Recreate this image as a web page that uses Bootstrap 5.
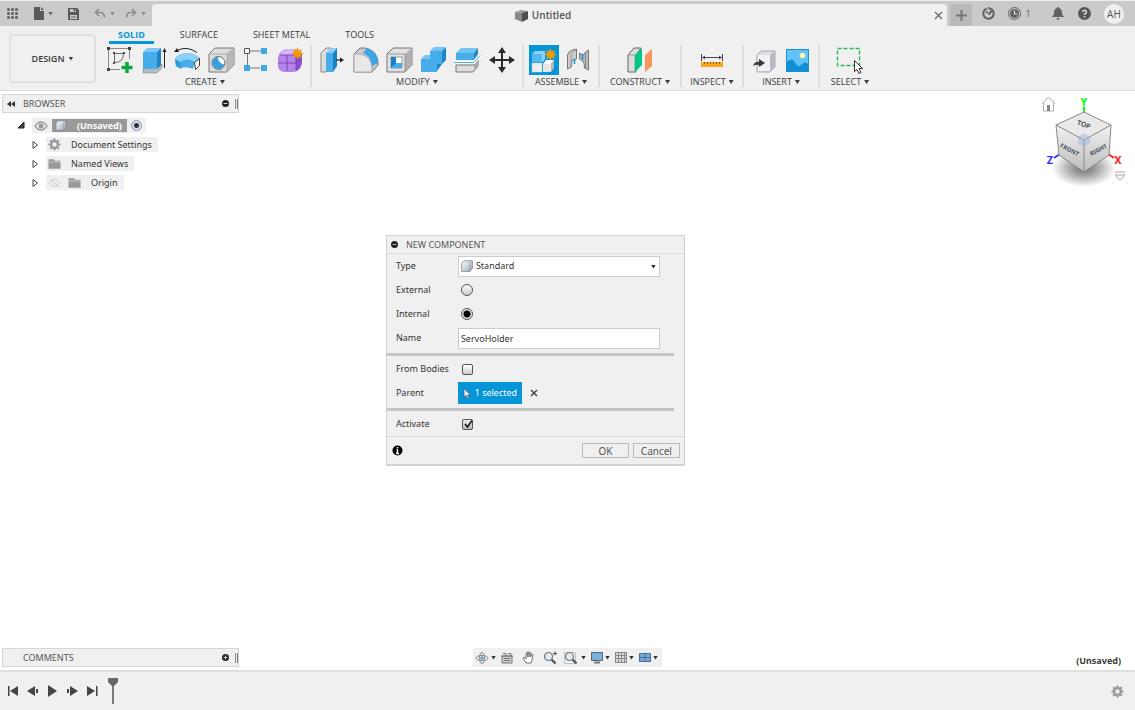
<!DOCTYPE html>
<html lang="en">
<head>
<meta charset="utf-8">
<meta name="viewport" content="width=device-width, initial-scale=1">
<title>Untitled</title>
<link href="https://cdn.jsdelivr.net/npm/bootstrap@5.3.0/dist/css/bootstrap.min.css" rel="stylesheet">
<style>
  :root { --ink:#3c3c3c; --panel:#f0f0f0; --blue:#0696d7; --rule:#d9d9d9; }
  body { font-family:"Open Sans","Noto Sans",sans-serif; font-size:9px; line-height:12px; color:var(--ink); background:#fff; }
  button { font:inherit; color:inherit; background:none; border:0; padding:0; }
  svg { display:block; flex:none; }
  .lucida { font-family:"Noto Sans","Open Sans",sans-serif; }
  .tri { display:inline-block; width:5px; height:4px; background:currentColor; clip-path:polygon(0 0,100% 0,50% 100%); flex:none; }
  .icon-btn { display:flex; align-items:center; justify-content:center; flex:none; }

  .titlebar { height:26px; background:#cacaca; border-top:1px solid #eee; color:#666; }
  .file-tools { width:152px; height:25px; padding-left:6px; gap:15px; }
  .file-tools .icon-btn { gap:4px; }
  .faded { color:#8c8c8c; }
  .history { gap:10px; }
  .doc-tab { background:var(--panel); border-radius:4px 4px 0 0; margin-top:3px; height:22px; color:#555; font-size:10px; }
  .add-tab { width:22px; height:22px; margin:3px 0 0 3px; background:#bababa; border-radius:3px 3px 0 0; }
  .session { width:163px; height:25px; color:#606060; padding:0 11px 0 10px; }
  .avatar { width:20px; height:20px; border-radius:50%; background:#f0f0f0; color:#555; font-size:10px; }

  .ribbon { background:var(--panel); height:65px; border-bottom:1px solid #dcdcdc; }
  .workspace { width:87px; height:49px; margin:8px 7px 0 9px; border:2px solid #e0e0e0; border-radius:4px; font-weight:600; }
  .mode-tabs { height:18px; gap:17px; padding-left:6px; }
  .mode-tabs .nav-link { padding:3px 9px 0; color:var(--ink); border-bottom:3px solid transparent; border-radius:0; line-height:12px; height:18px; font-weight:500; }
  .mode-tabs .nav-link.active { color:var(--blue); border-color:var(--blue); font-weight:700; }
  .tool-group { border-right:2px solid #dedede; height:42px; padding:0 3px; margin-top:1px; }
  .tool-group:last-child { border:0; }
  .tool-btn { width:34px; height:30px; }
  .tool-btn.on { width:30px; margin:0 2px; background:var(--blue); }
  .group-name { height:12px; gap:3px; margin-top:1px; font-weight:500; white-space:nowrap; }
  .w-construct { width:82px; } .w-inspect { width:62px; } .w-insert { width:76px; } .w-select { width:60px; }

  .browser { padding-top:3px; }
  .panel-bar { width:237px; height:19px; margin-left:2px; padding:0 0 0 4px; background:var(--panel); border:1px solid #d6d6d6; color:#555; }
  .grip { width:3px; height:10px; margin-left:6px; border-left:1px solid #888; border-right:1px solid #777; }
  .tree-list { padding-top:3px; }
  .tree-row { height:19px; padding-left:28px; }
  .tree-row.root { padding-left:14px; }
  .tree-chip { background:var(--panel); height:15px; color:#333; padding:0 6px 0 2px; gap:10px; margin-left:4px; }
  .tree-chip.tight { gap:4px; padding-right:4px; }
  .tree-icons { gap:7px; }
  .picked { background:#999; color:#fff; height:13px; font-weight:700; gap:10px; padding:0 5px 0 3px; }
  .twist { width:14px; padding-left:4px; }

  .dialog-box { position:absolute; left:34%; top:144px; width:299px; background:var(--panel); border:1px solid #d2d2d2; border-bottom-width:2px; color:#333; }
  .dialog-head { height:18px; border-bottom:1px solid #ddd; color:#555; padding-left:4px; }
  .field { height:24px; padding-left:9px; }
  .field > label, .field > .lbl { width:62px; flex:none; }
  .field .form-select, .field .form-control { width:202px; height:21px; font-size:9px; line-height:12px; border:1px solid #ccc; border-radius:0; color:#333; background-color:#fff; padding:2px; }
  .field .form-select { padding-left:17px; background-image:none; }
  .pick-icon { position:absolute; left:3px; top:4px; pointer-events:none; }
  .pick-tri { position:absolute; right:4px; top:9px; pointer-events:none; color:#222; }
  .tick { appearance:none; width:11px; height:11px; margin:0 0 0 4px; border:1px solid #555; border-radius:2px; background:linear-gradient(#fff,#ccc); }
  .tick.form-round { width:12px; height:12px; margin-left:3px; border-radius:50%; }
  .tick.form-round:checked { background:radial-gradient(circle,#000 0 3px,#ddd 4px); }
  .tree-chip .tick.form-round { width:11px; height:11px; margin:0; border-color:#89a; }
  .tree-chip .tick.form-round:checked { background:radial-gradient(circle,#333 0 2px,#d4deea 3px); }
  .tick[type=checkbox]:checked { background:linear-gradient(#eee,#bbb) ; }
  .tick-mark { position:absolute; left:4px; top:-1px; pointer-events:none; }
  .rule { height:3px; margin:3px 10px 1px 0; background:#c4c4c4; }
  .selected-btn { height:22px; width:64px; background:var(--blue); color:#fff; }
  .dialog-foot { height:28px; border-top:1px solid #ddd; padding:0 4px 0 5px; }
  .flat-btn { width:47px; height:15px; border:1px solid #bbb; color:#555; font-size:10px; line-height:12px; }

  .bottom-strip { padding-bottom:3px; }
  .nav-strip { background:var(--panel); height:19px; color:#333; }
  .doc-state { padding-right:14px; }
  .cube-area text { font-family:"Noto Sans",sans-serif; font-weight:700; }
  .timeline { background:var(--panel); height:40px; border-top:2px solid #dfdfdf; color:#444; padding:0 7px; }
</style>
</head>
<body>
<svg width="0" height="0" class="position-absolute" aria-hidden="true">
  <defs>
    <linearGradient id="silver" x2="1" y2="1"><stop stop-color="#fff"/><stop offset="1" stop-color="#9aa6b4"/></linearGradient>
    <linearGradient id="faceL" x2="0" y2="1"><stop stop-color="#f2f2f2"/><stop offset="1" stop-color="#bcbcbc"/></linearGradient>
    <radialGradient id="shade"><stop stop-color="#000" stop-opacity=".6"/><stop offset=".5" stop-color="#000" stop-opacity=".3"/><stop offset="1" stop-color="#000" stop-opacity="0"/></radialGradient>
    <symbol id="gear" viewBox="0 0 14 14"><circle cx="7" cy="7" r="3.6" fill="none" stroke="#999" stroke-width="2.4"/><path d="M7 .5v2.5M7 11v2.5M.5 7H3M11 7h2.5M2.4 2.4l1.8 1.8M9.8 9.8l1.8 1.8M2.4 11.6l1.8-1.8M9.8 4.2l1.8-1.8" stroke="#999" stroke-width="2.4"/></symbol>
    <symbol id="part" viewBox="0 0 12 12"><path d="M.6 3.500 3 .8h8.400v7.700L9 11.400H.6z" fill="url(#silver)" stroke="#778" stroke-width=".7"/><path d="M8.900 3.500v7.600M8.900 3.500l2.300-2.400" stroke="#8d99a8" stroke-width=".7"/></symbol>
    <symbol id="folder" viewBox="0 0 14 12"><path d="M.5 1h6l1 1.500h6v1H.500zM.500 4.200h13v7H.500z" fill="#999"/></symbol>
    <symbol id="spark" viewBox="0 0 12 12"><path d="m6 0 1.100 3.200L10.200 1.800 8.800 4.900 12 6 8.800 7.100l1.400 3.100-3.100-1.400L6 12 4.900 8.800l-3.100 1.400 1.400-3.100L0 6l3.200-1.100L1.800 1.800l3.100 1.400z" fill="#f79a00"/></symbol>
    <symbol id="zoomer" viewBox="0 0 14 14"><path d="m8.500 8.500 4 4" stroke="#555" stroke-width="2.400"/><circle cx="5.500" cy="5.500" r="4" fill="#dbeaf5" stroke="#777" stroke-width="1.200"/></symbol>
  </defs>
</svg>

<div class="d-flex flex-column min-vh-100">
  <header>
    <div class="titlebar d-flex">
      <div class="file-tools d-flex align-items-center">
        <button class="icon-btn" aria-label="Data panel"><svg width="13" height="13" fill="#555"><path d="M1 1h3v3H1zM5 1h3v3H5zM9 1h3v3H9zM1 5h3v3H1zM5 5h3v3H5zM9 5h3v3H9zM1 9h3v3H1zM5 9h3v3H5zM9 9h3v3H9z" stroke="#cacaca" stroke-width=".5"/></svg></button>
        <button class="icon-btn" aria-label="File"><svg width="10" height="13"><path d="M0 0h6v4h4v9H0zM7 0l3 3H7z" fill="#5a5a5a"/></svg><span class="tri"></span></button>
        <button class="icon-btn" aria-label="Save"><svg width="11" height="12"><path d="M0 0h9l2 2v10H0z" fill="#5a5a5a"/><path d="M2 1h6v3H2zM2 7h7v4H2z" fill="#cacaca"/><path d="M6 1h1v2H6zM3 9h5" stroke="#5a5a5a" fill="#5a5a5a"/></svg></button>
        <div class="history faded d-flex">
          <button class="icon-btn" aria-label="Undo"><svg width="12" height="11"><path d="M5 1 1.500 4.500 5 8M2 4.500h5q3 0 3.500 5" fill="none" stroke="#8c8c8c" stroke-width="1.700"/></svg><span class="tri"></span></button>
          <button class="icon-btn" aria-label="Redo"><svg width="12" height="11"><path d="m7 1 3.500 3.500L7 8M10 4.500H5Q2 4.500 1.500 9.500" fill="none" stroke="#8c8c8c" stroke-width="1.700"/></svg><span class="tri"></span></button>
        </div>
      </div>
      <div class="doc-tab d-flex align-items-center flex-grow-1">
        <div class="d-flex flex-grow-1 justify-content-center align-items-center gap-1"><svg width="13" height="13"><path d="M0 3 6 1l7 1-6 2z" fill="#999"/><path d="m0 3 7 1v9l-7-3z" fill="#888"/><path d="m7 4 6-2v8l-6 3z" fill="#4d4d4d"/></svg><span class="fw-semibold">Untitled</span></div>
        <button class="icon-btn me-1" aria-label="Close tab"><svg width="9" height="9"><path d="m1 1 7 7M8 1 1 8" stroke="#666" stroke-width="1.200"/></svg></button>
      </div>
      <button class="add-tab icon-btn" aria-label="New tab"><svg width="11" height="11"><path d="M5.500 0v11M0 5.500h11" stroke="#777" stroke-width="2"/></svg></button>
      <div class="session d-flex align-items-center justify-content-between">
        <button class="icon-btn" aria-label="Extensions"><svg width="13" height="13"><circle cx="6.500" cy="6.500" r="5.200" fill="none" stroke="#606060" stroke-width="2"/><path d="M6.500 7.500 9.500 4M4 4.500l1.500 1.200" fill="none" stroke="#606060" stroke-width="2"/><path d="m4 0 2 2" stroke="#cacaca" stroke-width="1.500"/></svg></button>
        <button class="icon-btn gap-1" aria-label="Job status"><svg width="13" height="13"><circle cx="6.500" cy="6.500" r="6" fill="none" stroke="#606060"/><circle cx="6.500" cy="6.500" r="4.500" fill="#606060"/><path d="M6.500 3.500v3.500h3" fill="none" stroke="#ddd" stroke-width="1.200"/></svg>1</button>
        <button class="icon-btn ms-2" aria-label="Notifications"><svg width="12" height="13"><path d="M6 0a1 1 0 0 1 1 1q3 1 3 5 0 2.500 2 4H0q2-1.500 2-4 0-4 3-5a1 1 0 0 1 1-1zM4.500 11h3Q7 13 6 13t-1.500-2z" fill="#606060"/></svg></button>
        <button class="icon-btn" aria-label="Help"><svg width="13" height="13"><circle cx="6.500" cy="6.500" r="6.500" fill="#555"/><path d="M4.500 5.200Q4.700 3.300 6.500 3.300T8.500 5Q8.500 6 7.300 6.500 6.500 7 6.500 8M6.500 9v1.600" fill="none" stroke="#ddd" stroke-width="1.500"/></svg></button>
        <button class="icon-btn avatar" aria-label="Account">AH</button>
      </div>
    </div>

    <div class="ribbon d-flex">
      <button class="workspace icon-btn gap-1">DESIGN <span class="tri"></span></button>
      <div class="flex-grow-1">
        <nav class="mode-tabs nav">
          <a class="nav-link active" href="#">SOLID</a><a class="nav-link" href="#">SURFACE</a><a class="nav-link" href="#">SHEET METAL</a><a class="nav-link" href="#">TOOLS</a>
        </nav>
        <div class="d-flex">
          <div class="tool-group ps-0">
            <div class="d-flex">
              <button class="tool-btn icon-btn" aria-label="Create sketch"><svg width="28" height="28"><path d="M4 2.500h19M2.500 4v18M4 23.500h10M23.500 4v9" stroke="#888" fill="none"/><path d="M1 1h3v3H1zM22 1h3v3h-3zM1 22h3v3H1zM7 6h2v2H7zM17 6h2v2h-2zM7 16h2v2H7z" fill="#444"/><path d="M8.500 7.500h9q0 9-9 9z" fill="none" stroke="#666"/><path d="M21 16v11M15.500 21.500h11" stroke="#0aa83c" stroke-width="3.500"/></svg></button>
              <button class="tool-btn icon-btn" aria-label="Extrude"><svg width="28" height="28"><path d="M3 22h15l4-4v4l-5 5H3z" fill="#bbb" stroke="#888" stroke-width=".6"/><path d="M3 6h14v17H3z" fill="#47adea"/><path d="m3 6 4-4h14l-4 4z" fill="#7cc9f5"/><path d="m17 6 4-4v17l-4 4z" fill="#1c86c7"/><path d="M24.500 22V5" stroke="#222"/><path d="m24.500 2 2 4h-4z" fill="#222"/></svg></button>
              <button class="tool-btn icon-btn" aria-label="Revolve"><svg width="28" height="28"><path d="M1 13Q3 8 13 7q7 0 13 5l-6 5q0 3-1 6-6-3-12-1l-5-2z" fill="#47adea"/><path d="M1 13Q3 8 13 7q7 0 13 5l-5 4Q13 11 6 16z" fill="#8bd0f7"/><path d="m1 13 1 7 5 3-1-7z" fill="#2f9ad9"/><path d="m20.500 16.500 5-4v7l-4 4z" fill="#fff" stroke="#333"/><path d="M3 4.500q10-5 20 2" fill="none" stroke="#222"/><path d="m0 6 3-4 2 4z" fill="#222"/></svg></button>
              <button class="tool-btn icon-btn" aria-label="Hole"><svg width="28" height="28"><path d="m1 8 6-6h19v17l-7 7H1z" fill="#ddd" stroke="#777"/><path d="m19 8 7-6v17l-7 7z" fill="#b8b8b8"/><path d="M1 8h18v18M19 8l7-6" fill="none" stroke="#aaa"/><circle cx="10.500" cy="17" r="6.500" fill="#fff" stroke="#666"/><path d="M10 10.500q0 7 6.500 8a6.200 6.200 0 1 1-6.500-8z" fill="#379ee0"/></svg></button>
              <button class="tool-btn icon-btn" aria-label="Pattern"><svg width="28" height="28"><path d="M8 5h11M5.500 8v11M8 22h10" stroke="#777"/><path d="M2.500 2.500h5v5h-5z" fill="#fff" stroke="#555"/><path d="M19 2h6v6h-6zM2 19h6v6H2zM19 19h6v6h-6z" fill="#3fa9e8"/></svg></button>
              <button class="tool-btn icon-btn" aria-label="Create form"><svg width="28" height="28"><path d="M2 12q1-7 8-9h8q8 1 8 7v6q-1 7-5 9-2 1-5 1H8q-6-1-6-6z" fill="#b583ea"/><path d="M4 9q2-5 7-6h7q4 1 5 4-2 2-5 2z" fill="#d6b4f7"/><path d="M20 10q3-2 6-3v9q-1 7-6 9z" fill="#8c50cc"/><path d="M2 17h18l5-4M11 9v16M4 9h13q3 0 3 3v13" fill="none" stroke="#7038b0" stroke-width=".8"/><use href="#spark" x="15" y="1" width="13" height="13"/></svg></button>
            </div>
            <button class="group-name icon-btn w-100">CREATE <span class="tri"></span></button>
          </div>
          <div class="tool-group">
            <div class="d-flex">
              <button class="tool-btn icon-btn" aria-label="Press pull"><svg width="28" height="28"><path d="m3 7 5-5h5v18l-5 6H3z" fill="#ddd" stroke="#888"/><path d="M8 7h7v19H8z" fill="#47adea"/><path d="m8 7 5-5h6l-4 5z" fill="#8bd0f7"/><path d="m15 7 4-5v18l-4 6z" fill="#1683c5"/><path d="M18 14h6" stroke="#222" stroke-width="1.200"/><path d="m22 11.500 4 2.500-4 2.500z" fill="#222"/></svg></button>
              <button class="tool-btn icon-btn" aria-label="Fillet"><svg width="28" height="28"><path d="m2 8 6-6h5q12 2 13 14v3l-6 7H2z" fill="#c8c8c8" stroke="#777"/><path d="M2 8h6q11 2 12 13v5H2z" fill="#e8e8e8" stroke="#aaa"/><path d="m11 7 4-5q10 3 11 15l-6 3Q19 10 11 7z" fill="#3ca5e5"/></svg></button>
              <button class="tool-btn icon-btn" aria-label="Shell"><svg width="28" height="28"><path d="m1 8 6-6h19v17l-7 7H1z" fill="#e2e2e2" stroke="#777"/><path d="m19 8 7-6v17l-7 7z" fill="#b0b0b0"/><path d="M1 8h18v18" fill="none" stroke="#999"/><path d="M5 11h11v11H5z" fill="#fff" stroke="#999"/><path d="M5 11h5v6h6v5H5z" fill="#47adea"/><path d="M5 11v11l5-5v-6z" fill="#1683c5"/></svg></button>
              <button class="tool-btn icon-btn" aria-label="Combine"><svg width="28" height="28"><path d="M1 13h9V5h12v13h-5v8H1z" fill="#47adea"/><path d="m1 13 4-4h5V5l4-4h12l-4 4H10v8z" fill="#75c5f3"/><path d="m22 5 4-4v13l-4 4zM17 18h5l-5 7z" fill="#1c86c7"/></svg></button>
              <button class="tool-btn icon-btn" aria-label="Split body"><svg width="28" height="28"><path d="M2 7h18v7H2z" fill="#47adea"/><path d="m2 7 5-5h17l-4 5z" fill="#75c5f3"/><path d="m20 7 4-5v6l-4 6z" fill="#1c86c7"/><path d="M2 19h18l4-5v6l-5 6H2z" fill="#ddd" stroke="#777"/><path d="m20 19 4-5v6l-4 5z" fill="#aaa"/><path d="M0 16.500h20l6-7" fill="none" stroke="#fff" stroke-width="3"/><path d="M0 16.500h20l6-7" fill="none" stroke="#47adea"/></svg></button>
              <button class="tool-btn icon-btn" aria-label="Move"><svg width="28" height="28"><path d="M14 5v18M5 14h18" stroke="#2b2b2b" stroke-width="2"/><path d="m14 1 4 6h-8zM14 27l4-6h-8zM1 14l6-4v8zM27 14l-6-4v8z" fill="#2b2b2b"/></svg></button>
            </div>
            <button class="group-name icon-btn w-100">MODIFY <span class="tri"></span></button>
          </div>
          <div class="tool-group">
            <div class="d-flex">
              <button class="tool-btn icon-btn on" aria-label="New component"><svg width="28" height="28"><path d="m2 8 3-3h10v8l-2 3H2z" fill="#8bd0f7"/><path d="M2 8h10v8H2z" fill="#57b9f3"/><path d="M2 17h10v9H2z" fill="#eee" stroke="#ccc" stroke-width=".5"/><path d="m13 18 3-4h8l-3 4z" fill="#fff"/><path d="M13 18h8v8h-8z" fill="#e6e6e6"/><path d="m21 18 3-4v8l-3 4z" fill="#b6b6b6"/><use href="#spark" x="14" y="2" width="13" height="13"/></svg></button>
              <button class="tool-btn icon-btn" aria-label="Joint"><svg width="28" height="28"><path d="M3.500 23V9q1-4 5-5l4-1v10l-4 1q-1 1-1 7z" fill="#ccc" stroke="#777"/><path d="M7 21V9q0-3 5-5" stroke="#999" fill="none"/><path d="m15.500 7 3 2q2 0 3-3l3-2v20l-4-2q0-6-2-7l-3-2z" fill="#bbb" stroke="#777"/><path d="M21.500 6v16" stroke="#888"/><path d="M10.500 18v-5M18.500 14V8" stroke="#0696d7" stroke-width="1.500"/></svg></button>
            </div>
            <button class="group-name icon-btn w-100">ASSEMBLE <span class="tri"></span></button>
          </div>
          <div class="tool-group w-construct">
            <div class="d-flex justify-content-center">
              <button class="tool-btn icon-btn" aria-label="Offset plane"><svg width="28" height="28"><path d="m2 9 6-7h7l-5 7v17H2z" fill="#ddd" stroke="#666"/><path d="M2 9h7v17" fill="none" stroke="#999"/><path d="m9 9 7-7v17l-7 7z" fill="#00c985"/><path d="m19 9 7-6v17l-7 6z" fill="#f7965a"/></svg></button>
            </div>
            <button class="group-name icon-btn w-100">CONSTRUCT <span class="tri"></span></button>
          </div>
          <div class="tool-group w-inspect">
            <div class="d-flex justify-content-center">
              <button class="tool-btn icon-btn" aria-label="Measure"><svg width="28" height="28"><path d="M3.500 8v7M24.500 8v7M5 11.500h18" stroke="#444"/><path d="m4 11.500 3-2v4zM24 11.500l-3-2v4z" fill="#444"/><path d="M3 16h22v5H3z" fill="#f9a61a"/><path d="M6.500 16v2M9.500 16v2M12.500 16v2M15.500 16v2M18.500 16v2M21.500 16v2" stroke="#8a5500"/></svg></button>
            </div>
            <button class="group-name icon-btn w-100">INSPECT <span class="tri"></span></button>
          </div>
          <div class="tool-group w-insert">
            <div class="d-flex justify-content-center">
              <button class="tool-btn icon-btn" aria-label="Insert derive"><svg width="28" height="28"><path d="m7 9 4-4h14v16l-5 5H7z" fill="#dcdce4" stroke="#aaa"/><path d="M8 9h12v16H8z" fill="#f2f2f6"/><path d="m20 9 5-4v16l-5 5z" fill="#b9b9c6"/><path d="M3 20q2-5 6-4v-3l6 4-6 4v-2q-3-1-6 1z" fill="#3a3a3a"/></svg></button>
              <button class="tool-btn icon-btn" aria-label="Insert image"><svg width="28" height="28"><path d="M2 3h23v23H2z" fill="#62c2f5"/><circle cx="18.500" cy="9.500" r="2.700" fill="#fff3b0"/><path d="M2 17q6-7 10 1 2 4 5 1 4-5 8 0v7H2z" fill="#0f8fd4"/><path d="M2.500 3.500h22v22h-22z" fill="none" stroke="#1b91d0"/></svg></button>
            </div>
            <button class="group-name icon-btn w-100">INSERT <span class="tri"></span></button>
          </div>
          <div class="tool-group w-select">
            <div class="d-flex justify-content-center">
              <button class="tool-btn icon-btn" aria-label="Select"><svg width="28" height="28"><path d="M1.500 2.500h22v17h-22z" fill="none" stroke="#2cb55c" stroke-width="1.400" stroke-dasharray="4 2"/><path d="M18.500 14.500v11l2.500-2 2 4 2-1-2-4h3.500z" fill="#fff" stroke="#333"/></svg></button>
            </div>
            <button class="group-name icon-btn w-100">SELECT <span class="tri"></span></button>
          </div>
        </div>
      </div>
    </div>
  </header>

  <main class="position-relative flex-grow-1 d-flex flex-column justify-content-between lucida">
    <div class="d-flex justify-content-between align-items-start">
      <aside class="browser">
        <div class="panel-bar d-flex align-items-center">
          <button class="icon-btn" aria-label="Collapse"><svg width="8" height="6"><path d="M4 0v6L0 3zM8 0v6L4 3z" fill="#333"/></svg></button>
          <span class="ms-2 flex-grow-1">BROWSER</span>
          <svg width="7" height="7"><circle cx="3.500" cy="3.500" r="3.500" fill="#222"/><path d="M1.500 3.500h4" stroke="#ccc"/></svg><span class="grip"></span>
        </div>
        <div class="tree-list">
          <div class="tree-row root d-flex align-items-center"><span class="twist"><svg width="7" height="7"><path d="M6 0v6H0z" fill="#444" stroke="#222"/></svg></span>
            <div class="tree-chip tight d-flex align-items-center"><svg width="14" height="10"><path d="M1 5q6-8 12 0-6 8-12 0z" fill="none" stroke="#999" stroke-width="1.300"/><circle cx="7" cy="5" r="2.500" fill="#999"/></svg>
              <span class="picked d-flex align-items-center"><svg width="12" height="11"><use href="#part"/></svg>(Unsaved)</span>
              <input type="radio" class="tick form-round" checked aria-label="Activate (Unsaved)"></div></div>
          <div class="tree-row d-flex align-items-center"><span class="twist"><svg width="7" height="8"><path d="M1 .500 5.500 4 1 7.500z" fill="#fff" stroke="#444"/></svg></span>
            <div class="tree-chip d-flex align-items-center"><svg width="13" height="13"><use href="#gear"/></svg>Document Settings</div></div>
          <div class="tree-row d-flex align-items-center"><span class="twist"><svg width="7" height="8"><path d="M1 .500 5.500 4 1 7.500z" fill="#fff" stroke="#444"/></svg></span>
            <div class="tree-chip d-flex align-items-center"><svg width="13" height="12"><use href="#folder"/></svg>Named Views</div></div>
          <div class="tree-row d-flex align-items-center"><span class="twist"><svg width="7" height="8"><path d="M1 .500 5.500 4 1 7.500z" fill="#fff" stroke="#444"/></svg></span>
            <div class="tree-chip d-flex align-items-center"><span class="tree-icons d-flex align-items-center"><svg width="13" height="10"><path d="M1 5q5-7 11 0-5 7-11 0zM2 1l9 8" fill="none" stroke="#ccc"/></svg><svg width="13" height="12"><use href="#folder"/></svg></span>Origin</div></div>
        </div>
      </aside>
      <div class="cube-area mt-1">
        <svg width="96" height="94" viewBox="0 0 96 94">
          <ellipse cx="45" cy="73" rx="32" ry="19" fill="url(#shade)"/>
          <path d="M3 8.500 9.500 2l6.500 6.500M4.500 7.500V16h10V7.500" fill="#fff" stroke="#aaa"/><path d="M8 10h3v6H8z" fill="#888"/>
          <path d="M45 12v8" stroke="#0f0" stroke-width="2"/><path d="m21 59-6 4" stroke="#33f" stroke-width="2"/><path d="m69 59 6 4" stroke="#f22" stroke-width="2"/>
          <path d="m17 30 28-13 27 13-27 15z" fill="#e9e9e9"/><path d="m17 30 28 15v32L20 60z" fill="url(#faceL)"/><path d="M72 30 45 45v32l25-17z" fill="url(#faceL)"/>
          <path d="m17 30 28-13 27 13-27 15zM17 30l3 30 25 17 25-17 2-30M45 45v32" fill="none" stroke="#888"/>
          <path d="m39 42 6-4 6 4v6l-6 4-6-4z" fill="#9db5d8" opacity=".5"/>
          <text x="45" y="32" font-size="7" text-anchor="middle" fill="#4b5560" transform="rotate(20 45 29)">TOP</text>
          <text x="31" y="57" font-size="6" text-anchor="middle" fill="#4b5560" transform="rotate(28 31 54)">FRONT</text>
          <text x="59" y="57" font-size="6" text-anchor="middle" fill="#4b5560" transform="rotate(-28 59 54)">RIGHT</text>
          <text x="45" y="11" font-size="11" text-anchor="middle" fill="#0f0">Y</text><text x="11" y="69" font-size="11" text-anchor="middle" fill="#33f">Z</text><text x="79" y="69" font-size="11" text-anchor="middle" fill="#f22">X</text>
          <path d="M76 77h10M76 80h10l-5 5z" fill="#fff" stroke="#aaa"/>
        </svg>
      </div>
    </div>

    <form class="dialog-box" aria-label="New component">
      <div class="dialog-head d-flex align-items-center"><svg width="7" height="7" class="me-2"><circle cx="3.500" cy="3.500" r="3.500" fill="#222"/><path d="M1.500 3.500h4" stroke="#aaa"/></svg>NEW COMPONENT</div>
      <div class="field d-flex align-items-center"><label for="type">Type</label><div class="position-relative"><select id="type" class="form-select"><option>Standard</option></select><svg width="12" height="12" class="pick-icon"><use href="#part"/></svg><span class="tri pick-tri"></span></div></div>
      <div class="field d-flex align-items-center"><label for="ext">External</label><input id="ext" type="radio" name="place" class="tick form-round"></div>
      <div class="field d-flex align-items-center"><label for="int">Internal</label><input id="int" type="radio" name="place" class="tick form-round" checked></div>
      <div class="field d-flex align-items-center"><label for="name">Name</label><input id="name" type="text" class="form-control" value="ServoHolder"></div>
      <div class="rule"></div>
      <div class="field d-flex align-items-center"><label for="bodies">From Bodies</label><input id="bodies" type="checkbox" class="tick"></div>
      <div class="field d-flex align-items-center"><span class="lbl">Parent</span><button type="button" class="selected-btn icon-btn gap-1"><svg width="8" height="11"><path d="M1 .500v8.500l2-1.500 1.500 3 1.500-.800L4.500 7h3z" fill="#eee" stroke="#456" stroke-width=".7"/></svg>1 selected</button><button type="button" class="icon-btn ms-2" aria-label="Clear parent"><svg width="8" height="8"><path d="m1 1 6 6M7 1 1 7" stroke="#444" stroke-width="1.500"/></svg></button></div>
      <div class="rule"></div>
      <div class="field d-flex align-items-center"><label for="act">Activate</label><div class="position-relative d-flex"><input id="act" type="checkbox" class="tick" checked><svg width="12" height="12" class="tick-mark"><path d="m3 6 2.500 3L10 2.500" fill="none" stroke="#111" stroke-width="1.500"/></svg></div></div>
      <div class="dialog-foot d-flex align-items-center"><svg width="11" height="11"><circle cx="5.500" cy="5.500" r="5" fill="#000"/><path d="M5.500 2v1.500M4.500 5h1v3.500M4 8.500h3" fill="none" stroke="#fff" stroke-width="1.400"/></svg><button type="button" class="flat-btn ms-auto me-1">OK</button><button type="button" class="flat-btn">Cancel</button></div>
    </form>

    <div class="bottom-strip row g-0 align-items-end">
      <div class="col"><div class="panel-bar d-flex align-items-center"><span class="ms-3 flex-grow-1">COMMENTS</span><svg width="7" height="7"><circle cx="3.500" cy="3.500" r="3.500" fill="#222"/><path d="M1.500 3.500h4M3.500 1.500v4" stroke="#ccc"/></svg><span class="grip"></span></div></div>
      <div class="col-auto">
        <div class="nav-strip d-flex align-items-center gap-1">
          <button class="icon-btn" aria-label="Orbit"><svg width="18" height="14"><ellipse cx="9" cy="7" rx="6" ry="2.500" fill="none" stroke="#888"/><ellipse cx="9" cy="7" rx="2.500" ry="5.500" fill="none" stroke="#888"/><path d="M9 5v4M7 7h4" stroke="#48a"/></svg><span class="tri"></span></button>
          <button class="icon-btn me-1" aria-label="Look at"><svg width="14" height="12"><path d="M2 4h10v7H2zM3 1.500h3V4M8 1.500h3V4M1 4h12" fill="#ccc" stroke="#777"/><path d="M4 6.500h6M4 8.500h6" stroke="#777"/></svg></button>
          <button class="icon-btn me-1" aria-label="Pan"><svg width="13" height="13"><path d="M4 12 1 7l1-1 2 2V2h1.500v4V1H7v5V1.500h1.500V6L10 3l1 .500L10 9l-1 3z" fill="#fff" stroke="#777"/></svg></button>
          <button class="icon-btn" aria-label="Zoom"><svg width="14" height="14"><use href="#zoomer" width="14" height="14"/><path d="M10 2.500h4M12 .500v4" stroke="#555"/></svg></button>
          <button class="icon-btn" aria-label="Fit"><svg width="20" height="14"><path d="M3.500 1.500h11v11h-11z" fill="none" stroke="#999" stroke-dasharray="1 1"/><use href="#zoomer" x="3" width="14" height="14"/></svg><span class="tri"></span></button>
          <button class="icon-btn" aria-label="Display settings"><svg width="15" height="13"><path d="M1.500 1.500h11v8h-11z" fill="#78b3e0" stroke="#567"/><path d="M4 11.500h6" stroke="#777" stroke-width="2"/></svg><span class="tri"></span></button>
          <button class="icon-btn" aria-label="Grid"><svg width="15" height="13"><path d="M1 1h11v11H1z" fill="#ddd"/><path d="M1.500 1v11M4.500 1v11M7.500 1v11M10.500 1v11M12.500 1v11M1 1.500h11M1 4.500h11M1 7.500h11M1 11.500h12" stroke="#888"/></svg><span class="tri"></span></button>
          <button class="icon-btn me-1" aria-label="Viewports"><svg width="15" height="13"><path d="M1 2h12v9H1z" fill="#78a9d6"/><path d="M7 2v9M1 6.500h12M1.500 2.500h11v8h-11z" fill="none" stroke="#47719b"/></svg><span class="tri"></span></button>
        </div>
      </div>
      <div class="col text-end fw-bold"><span class="doc-state">(Unsaved)</span></div>
    </div>
  </main>

  <footer class="timeline d-flex align-items-center">
    <div class="d-flex align-items-center gap-2">
      <button class="icon-btn" aria-label="To start"><svg width="12" height="12" fill="#444"><path d="M1 1h1.500v10H1zM11 1v10L3 6z"/></svg></button>
      <button class="icon-btn" aria-label="Step back"><svg width="12" height="12" fill="#444"><path d="M8 1v10L0 6zM9 4h2v4H9z"/></svg></button>
      <button class="icon-btn" aria-label="Play"><svg width="12" height="12" fill="#444"><path d="M1 0v12l9-6z"/></svg></button>
      <button class="icon-btn" aria-label="Step forward"><svg width="12" height="12" fill="#444"><path d="M3 1v10l8-5zM0 4h2v4H0z"/></svg></button>
      <button class="icon-btn" aria-label="To end"><svg width="12" height="12" fill="#444"><path d="M0 1v10l8-5zM9 1h1.500v10H9z"/></svg></button>
      <svg width="12" height="26"><path d="M1 0h10v4L7.500 7.500h-3L1 4z" fill="#666"/><path d="M6 7v19" stroke="#555" stroke-width="1.500"/></svg>
    </div>
    <button class="icon-btn ms-auto me-1" aria-label="Timeline settings"><svg width="13" height="13"><use href="#gear"/></svg></button>
  </footer>
</div>
<script src="https://cdn.jsdelivr.net/npm/bootstrap@5.3.0/dist/js/bootstrap.bundle.min.js"></script>
</body>
</html>
